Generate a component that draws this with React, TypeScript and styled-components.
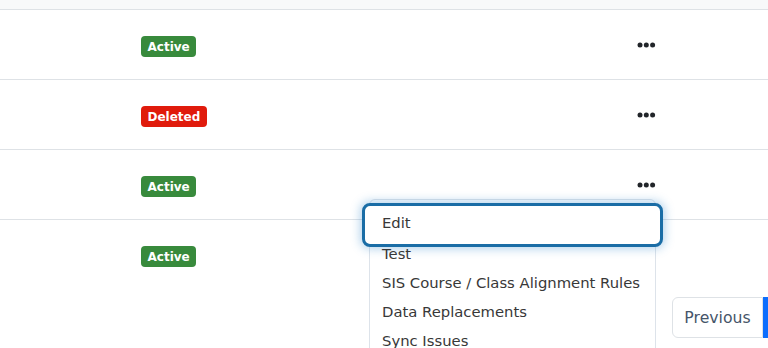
import React from "react";
import styled, { createGlobalStyle } from "styled-components";

const Global = createGlobalStyle`
  html, body { margin: 0; padding: 0; background: #fff; overflow: hidden; }
  body { font-family: "DejaVu Sans", sans-serif; }
`;

const Page = styled.div`
  position: relative;
  width: 768px;
  height: 348px;
  overflow: hidden;
  background: #fff;
`;

const HeaderBand = styled.div`
  height: 9px;
  background: #f8f9fa;
  border-bottom: 1px solid #dee2e6;
`;

const Row = styled.div<{ $last?: boolean }>`
  display: grid;
  grid-template-columns: 141px 496px 1fr;
  align-items: center;
  height: 69px;
  border-bottom: ${(p) => (p.$last ? "none" : "1px solid #dee2e6")};
`;

const Badge = styled.span<{ $tone: "active" | "deleted" }>`
  justify-self: start;
  display: inline-flex;
  align-items: center;
  height: 21px;
  padding: 0 6.5px;
  margin-top: 4px;
  border-radius: 4px;
  background: ${(p) => (p.$tone === "active" ? "#388a3c" : "#e01b0c")};
  color: #fff;
  font-family: "DejaVu Sans", sans-serif;
  font-weight: 700;
  font-size: 12px;
  line-height: 1;
`;

const ActionButton = styled.button`
  justify-self: start;
  display: flex;
  align-items: center;
  padding: 0;
  margin: 0;
  border: 0;
  background: none;
  cursor: pointer;
`;

const Menu = styled.div`
  position: absolute;
  left: 369px;
  top: 199px;
  width: 285px;
  height: 240px;
  padding-top: 8px;
  background: #fff;
  border: 1px solid #dde3ea;
  border-radius: 6px;
  z-index: 5;
`;

const MenuItem = styled.div<{ $focused?: boolean }>`
  position: relative;
  display: flex;
  align-items: center;
  height: ${(p) => (p.$focused ? "31px" : "29px")};
  padding: 0 12px ${(p) => (p.$focused ? "2px" : "0")};
  box-sizing: border-box;
  font-family: "DejaVu Sans", sans-serif;
  font-size: 14.8px;
  color: #383838;
  white-space: nowrap;
  ${(p) =>
    p.$focused &&
    `
    &::before {
      content: "";
      position: absolute;
      top: -5px;
      bottom: -8px;
      left: -8px;
      right: -8px;
      background: #fff;
      border: 3px solid #1a6da6;
      border-radius: 8px;
      box-shadow: 0 0 10px 2px rgba(40, 130, 200, 0.35);
    }
  `}
`;

const ItemLabel = styled.span`
  position: relative;
  z-index: 1;
`;

const PaginationBar = styled.div`
  display: flex;
  justify-content: flex-end;
  margin-top: 8px;
`;

const Pager = styled.div`
  display: flex;
  margin-right: -35px;
`;

const PageButton = styled.button<{ $active?: boolean }>`
  width: ${(p) => (p.$active ? "40px" : "91px")};
  height: 41px;
  box-sizing: border-box;
  padding: 0;
  border: 1px solid ${(p) => (p.$active ? "#0d6efd" : "#dee2e6")};
  background: ${(p) => (p.$active ? "#0d6efd" : "#fff")};
  color: ${(p) => (p.$active ? "#fff" : "#465569")};
  font-family: "DejaVu Sans", sans-serif;
  font-size: 15.7px;
  text-align: center;
  border-radius: ${(p) => (p.$active ? "0" : "6px 0 0 6px")};
  cursor: pointer;
`;

const Dots = () => (
  <svg width="19" height="6" viewBox="0 0 19 6" aria-hidden="true">
    <circle cx="3" cy="3" r="2.5" fill="#212529" />
    <circle cx="9.3" cy="3" r="2.5" fill="#212529" />
    <circle cx="15.6" cy="3" r="2.5" fill="#212529" />
  </svg>
);

const rows: { status: "active" | "deleted"; label: string }[] = [
  { status: "active", label: "Active" },
  { status: "deleted", label: "Deleted" },
  { status: "active", label: "Active" },
  { status: "active", label: "Active" },
];

export default function App() {
  return (
    <Page>
      <Global />
      <HeaderBand />
      {rows.map((r, i) => (
        <Row key={i} $last={i === rows.length - 1}>
          <span />
          <Badge $tone={r.status}>{r.label}</Badge>
          {i < 3 ? (
            <ActionButton aria-label="Actions">
              <Dots />
            </ActionButton>
          ) : (
            <span />
          )}
        </Row>
      ))}
      <PaginationBar>
        <Pager>
          <PageButton>Previous</PageButton>
          <PageButton $active>1</PageButton>
        </Pager>
      </PaginationBar>
      <Menu>
        <MenuItem $focused>
          <ItemLabel>Edit</ItemLabel>
        </MenuItem>
        <MenuItem>
          <ItemLabel>Test</ItemLabel>
        </MenuItem>
        <MenuItem>
          <ItemLabel>SIS Course / Class Alignment Rules</ItemLabel>
        </MenuItem>
        <MenuItem>
          <ItemLabel>Data Replacements</ItemLabel>
        </MenuItem>
        <MenuItem>
          <ItemLabel>Sync Issues</ItemLabel>
        </MenuItem>
      </Menu>
    </Page>
  );
}
